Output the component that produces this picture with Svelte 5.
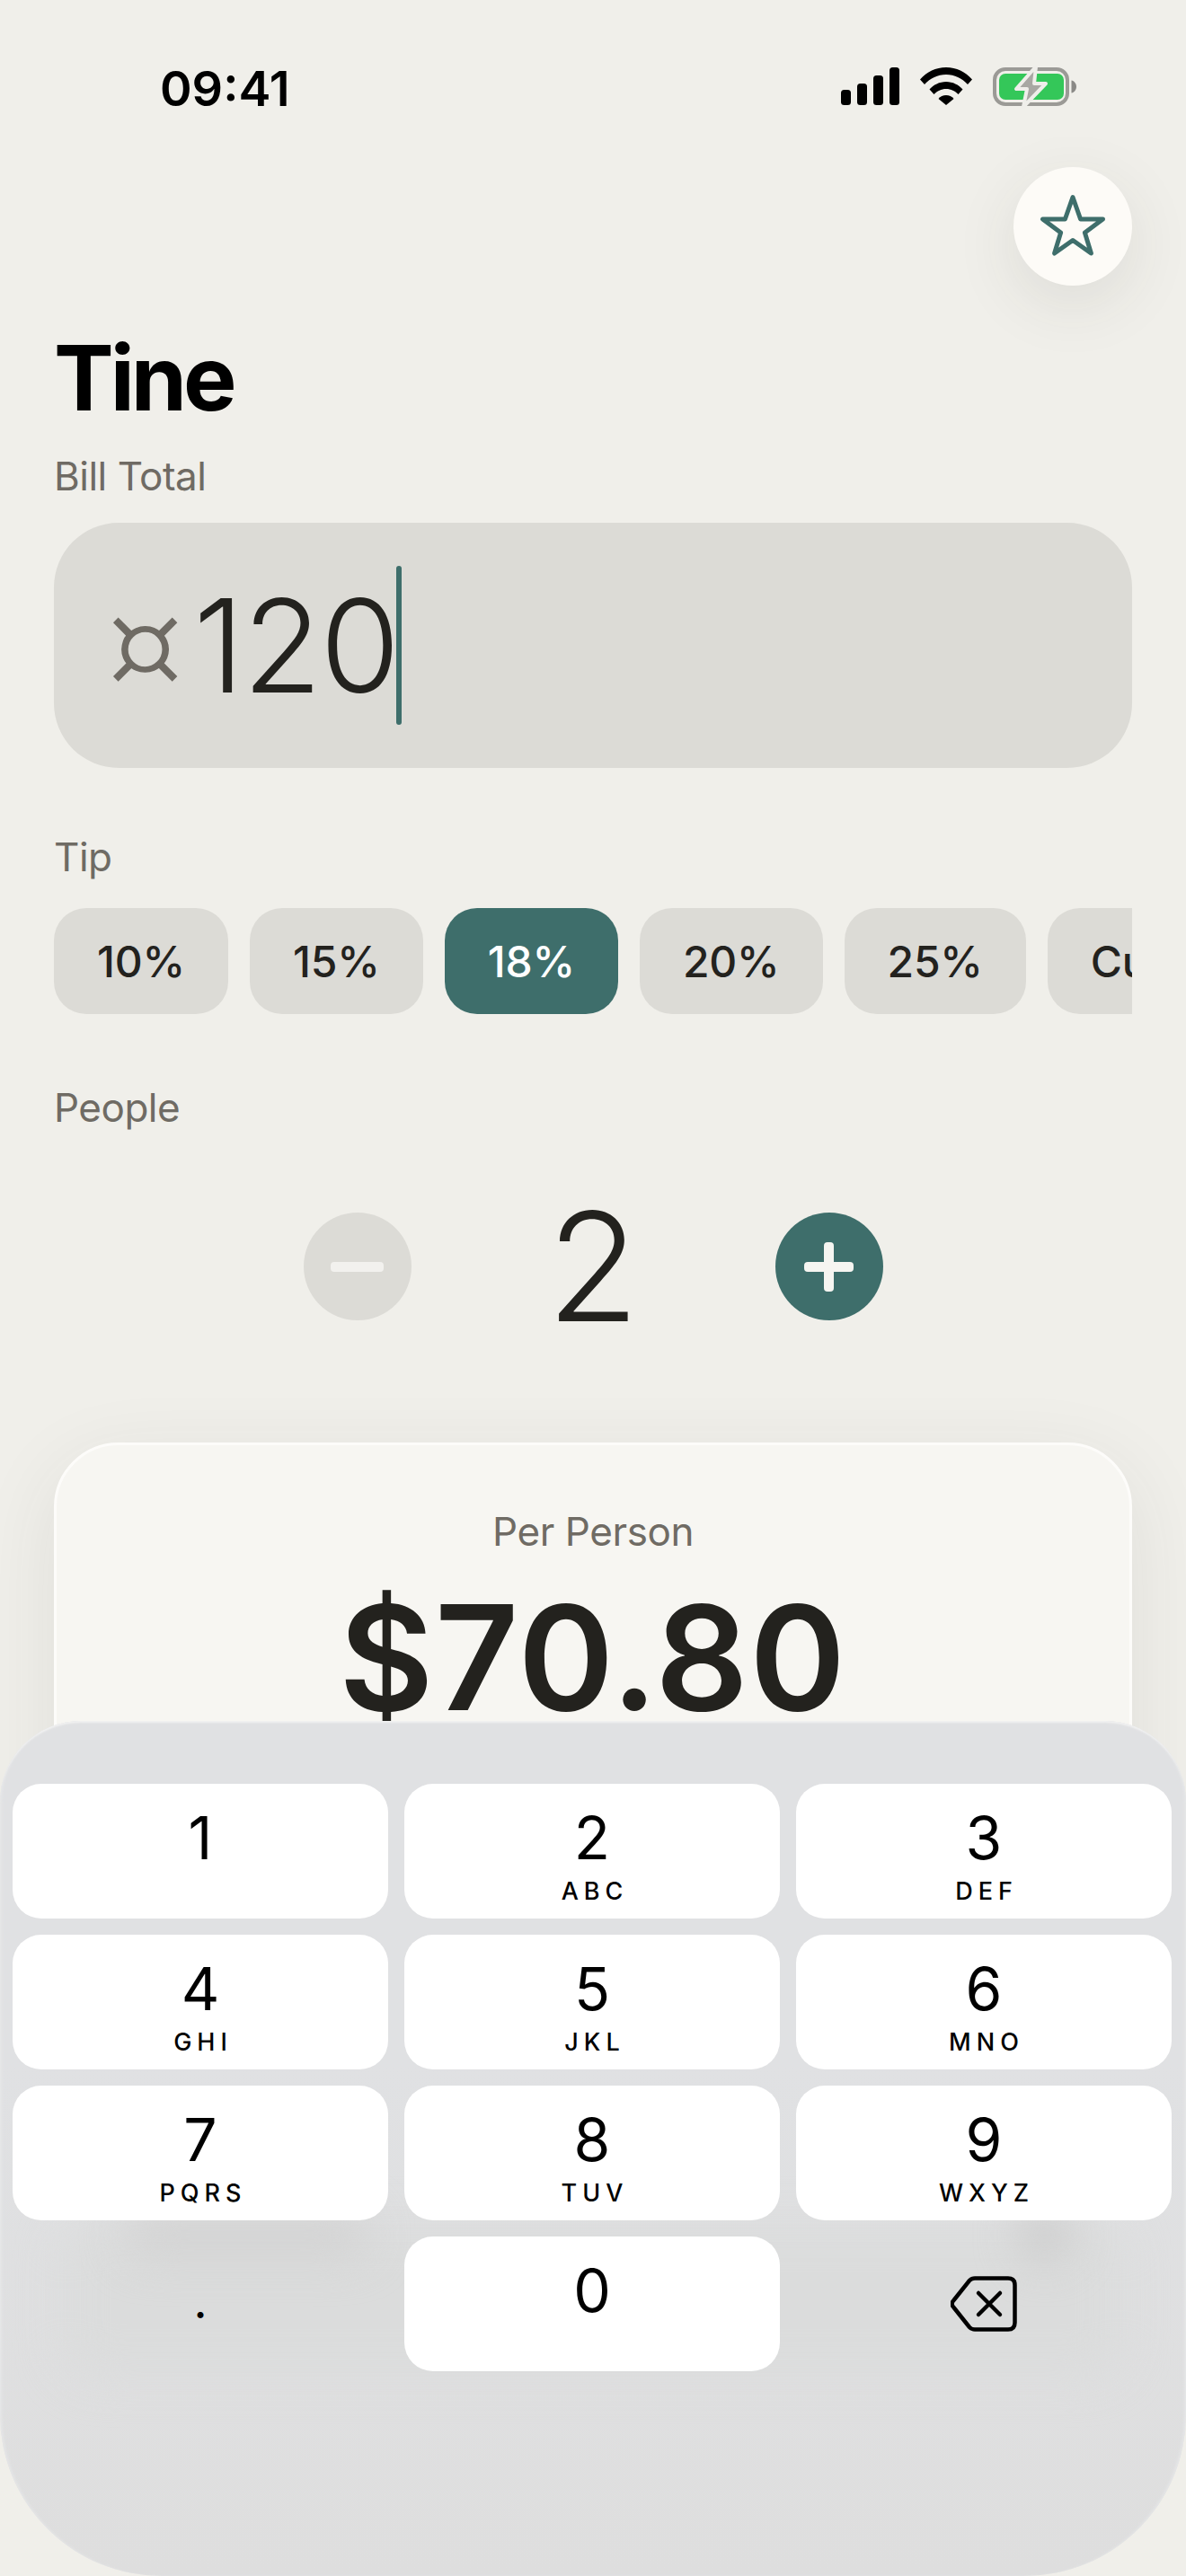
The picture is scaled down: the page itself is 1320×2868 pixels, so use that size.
<script>
  const tips = ["10%", "15%", "18%", "20%", "25%", "Custom"];
  const selectedTip = "18%";
  const keys = [
    { digit: "1", letters: "" },
    { digit: "2", letters: "ABC" },
    { digit: "3", letters: "DEF" },
    { digit: "4", letters: "GHI" },
    { digit: "5", letters: "JKL" },
    { digit: "6", letters: "MNO" },
    { digit: "7", letters: "PQRS" },
    { digit: "8", letters: "TUV" },
    { digit: "9", letters: "WXYZ" },
  ];
</script>

<div class="screen">
  <header class="status-bar">
    <span class="time">09:41</span>
    <div class="status-icons">
      <svg width="65" height="42" viewBox="0 0 65 42" fill="#000">
        <rect x="0" y="25" width="11" height="17" rx="3.5" />
        <rect x="18" y="18" width="11" height="24" rx="3.5" />
        <rect x="36" y="9" width="11" height="33" rx="3.5" />
        <rect x="54" y="0" width="11" height="42" rx="3.5" />
      </svg>
      <svg width="58" height="42" viewBox="0 0 58 42" fill="#000">
        <path d="M0 13.500C7.500 5 17.500 0 29 0s21.500 5 29 13.500L53 19C46.500 12 38.500 8 29 8S11.500 12 5 19z" />
        <path d="M10.500 24.500C15 19.500 21.500 16 29 16s14 3.500 18.500 8.500l-5 5.500C39 26.500 34.500 24 29 24s-10 2.500-13.500 6z" />
        <path d="M20.500 35C22.500 32.500 25.500 31 29 31s6.500 1.500 8.500 4L29 42z" />
      </svg>
      <svg class="battery" width="93" height="44" viewBox="0 0 93 44">
        <rect x="2" y="2" width="81" height="39" rx="12" fill="none" stroke="#9b9a96" stroke-width="4" />
        <rect x="7" y="7" width="72" height="29" rx="7" fill="#34c759" />
        <path d="M87.500 14.500c3 .5 5.500 3.500 5.500 7s-2.500 6.500-5.500 7z" fill="#8a8986" />
        <path d="M48 -1L26 24h12l-4 20L59 18H46z" fill="#a8a7a3" stroke="#efeeea" stroke-width="4" stroke-linejoin="round" />
      </svg>
    </div>
  </header>

  <div class="top-actions">
    <button class="fav-btn" aria-label="Favourite">
      <svg width="72" height="72" viewBox="0 0 72 72" fill="none">
        <path d="M36 3.500l8.600 24.500h24.900L49.400 43l7 23L36 51.500 15.600 66l7-23L2.500 28h24.900z" stroke="#3e6e6b" stroke-width="5" stroke-linejoin="round" />
      </svg>
    </button>
  </div>

  <main class="content">
    <h1>Tine</h1>

    <p class="label bill-label">Bill Total</p>
    <div class="bill-input">
      <span class="currency">¤</span><span class="amount">120</span><span class="caret"></span>
    </div>

    <p class="label tip-label">Tip</p>
    <div class="tips">
      {#each tips as tip}
        <button class="tip" class:selected={tip === selectedTip}>{tip}</button>
      {/each}
    </div>

    <p class="label people-label">People</p>
    <div class="stepper">
      <button class="step minus" aria-label="Remove person">
        <svg width="59" height="11" viewBox="0 0 59 11"><rect width="59" height="11" rx="4" fill="#f2f1ee" /></svg>
      </button>
      <span class="count">2</span>
      <button class="step plus" aria-label="Add person">
        <svg width="55" height="55" viewBox="0 0 55 55" fill="#f6f5f1">
          <rect x="0" y="22" width="55" height="11" rx="4" />
          <rect x="22" y="0" width="11" height="55" rx="4" />
        </svg>
      </button>
    </div>

    <section class="summary">
      <p class="summary-label">Per Person</p>
      <p class="per-person">$70.80</p>
    </section>
  </main>

  <div class="keyboard">
    <span class="smudge smudge-card"></span>
    <span class="smudge smudge-left"></span>
    <span class="smudge smudge-right"></span>
    <div class="keys">
      {#each keys as key}
        <button class="key">
          <span class="digit">{key.digit}</span>
          <span class="letters">{key.letters}</span>
        </button>
      {/each}
      <div class="key-plain dot">.</div>
      <button class="key">
        <span class="digit">0</span>
        <span class="letters"></span>
      </button>
      <div class="key-plain">
        <svg width="74" height="62" viewBox="0 0 74 62" fill="none" stroke="#000" stroke-width="4.500" stroke-linecap="round" stroke-linejoin="round">
          <path d="M27 2.500h37c5 0 7.500 2.500 7.500 7.500v42c0 5-2.500 7.500-7.500 7.500H27c-2.500 0-4.500-1-6-2.500L3.500 35c-2.500-2.500-2.500-5.500 0-8L21 5c1.500-1.500 3.500-2.500 6-2.500z" />
          <path d="M31 19l24 24M55 19L31 43" />
        </svg>
      </div>
    </div>
  </div>
</div>

<style>
  :global(body) {
    margin: 0;
    background: #f0efea;
  }

  button {
    border: none;
    padding: 0;
    font: inherit;
    color: inherit;
    cursor: pointer;
  }

  p,
  h1 {
    margin: 0;
  }

  .screen {
    position: relative;
    width: 1320px;
    height: 2868px;
    overflow: hidden;
    background: #f0efea;
    color: #23221e;
    font-family: Inter, "Liberation Sans", sans-serif;
  }

  /* status bar */
  .status-bar {
    display: flex;
    justify-content: space-between;
    align-items: flex-start;
    height: 186px;
    box-sizing: border-box;
    padding: 66px 122px 0 178px;
  }

  .time {
    font-size: 54px;
    line-height: 65px;
    font-weight: 600;
    color: #000;
  }

  .status-icons {
    display: flex;
    align-items: flex-start;
    gap: 23px;
    padding-top: 9px;
  }

  .battery {
    overflow: visible;
  }

  /* favourite */
  .top-actions {
    display: flex;
    justify-content: flex-end;
    padding: 0 60px;
  }

  .fav-btn {
    width: 132px;
    height: 132px;
    border-radius: 50%;
    background: #fdfbf7;
    display: flex;
    align-items: center;
    justify-content: center;
    box-shadow: 0 20px 70px rgba(60, 58, 50, 0.1);
  }

  /* main */
  .content {
    padding: 0 60px;
  }

  h1 {
    margin-top: 42px;
    font-size: 100px;
    line-height: 121px;
    font-weight: 700;
    color: #000;
    letter-spacing: -4px;
  }

  .label {
    font-size: 44px;
    line-height: 53px;
    color: #6f6b64;
    letter-spacing: -0.5px;
  }

  .bill-label {
    margin-top: 23px;
  }

  .bill-input {
    margin-top: 25px;
    height: 273px;
    border-radius: 72px;
    background: #dcdbd6;
    display: flex;
    align-items: center;
    padding-left: 59px;
  }

  .currency {
    font-family: "DejaVu Sans", Inter, sans-serif;
    font-size: 134px;
    font-weight: 300;
    color: #6f6b64;
    line-height: 1;
    -webkit-text-stroke: 1.5px #6f6b64;
  }

  .amount {
    margin-left: 11px;
    font-size: 144px;
    font-weight: 300;
    line-height: 1;
    letter-spacing: -2px;
  }

  .caret {
    width: 6px;
    height: 177px;
    margin-left: -2px;
    border-radius: 3px;
    background: #3e6e6b;
  }

  .tip-label {
    margin-top: 73px;
  }

  .tips {
    margin-top: 30px;
    display: flex;
    gap: 24px;
    overflow: hidden;
  }

  .tip {
    flex-shrink: 0;
    height: 118px;
    padding: 0 48px;
    border-radius: 36px;
    background: #dcdbd6;
    font-size: 48px;
    font-weight: 500;
    letter-spacing: -0.2px;
    color: #23221e;
  }

  .tip.selected {
    background: #3e6e6b;
    color: #fff;
  }

  .people-label {
    margin-top: 78px;
  }

  .stepper {
    margin-top: 90px;
    display: flex;
    justify-content: center;
    align-items: center;
    gap: 72px;
  }

  .step {
    width: 120px;
    height: 120px;
    border-radius: 50%;
    display: flex;
    align-items: center;
    justify-content: center;
  }

  .minus {
    background: #dcdbd6;
  }

  .plus {
    background: #3e6e6b;
  }

  .count {
    width: 261px;
    text-align: center;
    font-size: 168px;
    line-height: 120px;
    font-weight: 300;
  }

  .summary {
    margin-top: 136px;
    height: 1000px;
    box-sizing: border-box;
    padding-top: 70px;
    border: 3px solid #fdfcfa;
    border-radius: 72px;
    background: #f7f6f2;
    text-align: center;
    box-shadow: 0 24px 90px rgba(60, 58, 50, 0.09);
  }

  .summary-label {
    font-size: 44px;
    line-height: 53px;
    letter-spacing: -0.4px;
    color: #6f6b64;
  }

  .per-person {
    margin-top: 15px;
    font-size: 162px;
    line-height: 196px;
    font-weight: 600;
    letter-spacing: 1.5px;
  }

  /* keypad */
  .keyboard {
    position: absolute;
    left: 0;
    right: 0;
    top: 1916px;
    bottom: 0;
    box-sizing: border-box;
    padding: 70px 14px 0;
    border-radius: 90px 90px 180px 180px;
    background: linear-gradient(#e0e1e3 0, #e0e1e3 40%, #dedede 100%);
    box-shadow: inset 0 3px 2px -1px #f1f1f1, inset 3px 0 3px -1px #e5e6e7, inset -3px 0 3px -1px #e5e6e7;
    overflow: hidden;
  }

  .smudge {
    position: absolute;
    border-radius: 40px;
    filter: blur(24px);
  }

  .smudge-card {
    left: 70px;
    right: 70px;
    top: 560px;
    height: 170px;
    background: #dbdcdc;
  }

  .smudge-left {
    left: 140px;
    top: 550px;
    width: 270px;
    height: 45px;
    background: #d2d2d2;
  }

  .smudge-right {
    left: 1135px;
    top: 545px;
    width: 55px;
    height: 55px;
    background: #cacaca;
  }

  .keys {
    position: relative;
    display: grid;
    grid-template-columns: repeat(3, 418px);
    grid-auto-rows: 150px;
    gap: 18px;
  }

  .key {
    display: flex;
    flex-direction: column;
    align-items: center;
    background: #fff;
    border-radius: 32px;
    color: #000;
  }

  .digit {
    margin-top: 23px;
    font-size: 66px;
    line-height: 74px;
    font-weight: 400;
  }

  .letters {
    margin-top: 6px;
    height: 34px;
    font-size: 27px;
    line-height: 34px;
    font-weight: 500;
    letter-spacing: 6px;
    padding-left: 6px;
  }

  .key-plain {
    display: flex;
    align-items: center;
    justify-content: center;
    color: #000;
  }

  .dot {
    padding-bottom: 4px;
    box-sizing: border-box;
    font-size: 48px;
    font-weight: 500;
  }
</style>
